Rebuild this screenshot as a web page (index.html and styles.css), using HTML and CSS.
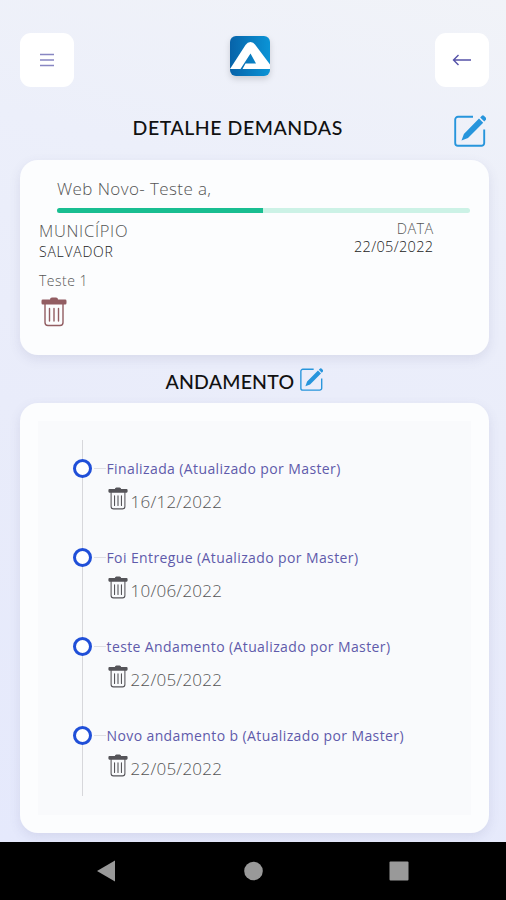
FILE: index.html
```
<!DOCTYPE html>
<html lang="pt-BR">
<head>
    <meta charset="utf-8">
    <title>Detalhe Demandas</title>
    <link rel="stylesheet" href="styles.css">
</head>
<body>
    <!-- Shared icons -->
    <svg class="symbols" width="0" height="0">
        <symbol id="edit" viewBox="0 0 32 32">
            <path d="M19 1.800H4A2.800 2.800 0 0 0 1.200 4.600V28A2.800 2.800 0 0 0 4 30.800H27.400A2.800 2.800 0 0 0 30.200 28V14.500" fill="none" stroke="currentColor" stroke-width="1.900"/>
            <path d="M25 3.600l4.200 4.200L14 23 7.500 25.500l2.400-6.600zM26.200 2.400l1.700-1.600a1.400 1.400 0 0 1 2 0l2 2a1.400 1.400 0 0 1 0 2l-1.600 1.700z" fill="currentColor"/>
        </symbol>
        <symbol id="trash" viewBox="0 0 26 30">
            <path d="M9 2.600Q9 .5 11 .5h4q2 0 2 2.100h7.200q1.300 0 1.300 1.400v2q0 1.500-1.300 1.500H1.800Q.5 7.500 .5 6V4q0-1.400 1.300-1.400z" fill="currentColor"/>
            <path d="M4 7v18.500q0 3 3 3h12q3 0 3-3V7M8.500 11.500v12.500M13 11.500v12.500M17.500 11.500v12.500" fill="none" stroke="currentColor" stroke-width="1.400" stroke-linecap="round"/>
        </symbol>
    </svg>

    <div class="screen">
        <header class="topbar">
            <button class="square-btn">
                <svg width="16" height="14" viewBox="0 0 16 14"><path d="M1 1.500h14M1 7h14M1 12.500h14" stroke="#8886c2" stroke-width="1.500"/></svg>
            </button>
            <svg class="logo" width="40" height="40" viewBox="0 0 40 40">
                <defs>
                    <linearGradient id="blue" x1="0" y1="0" x2="1" y2="0">
                        <stop offset="0" stop-color="#0763a9"/>
                        <stop offset="1" stop-color="#0b94d6"/>
                    </linearGradient>
                </defs>
                <rect width="40" height="40" rx="6" fill="url(#blue)"/>
                <path d="M0 33L15.500 9Q17.500 6 20.500 6t4.500 2.500L40 28.500V33H12.500L15.500 27.500H26L20.500 17.500 10.500 33z" fill="#fff"/>
            </svg>
            <button class="square-btn">
                <svg width="20" height="14" viewBox="0 0 20 14"><path d="M19 7H1.500M6.500 2L1.500 7l5 5" fill="none" stroke="#5552a8" stroke-width="1.400"/></svg>
            </button>
        </header>

        <div class="page-title">
            <h1>DETALHE DEMANDAS</h1>
            <svg class="edit-icon" width="32" height="32"><use href="#edit"/></svg>
        </div>

        <section class="card demand">
            <div class="demand-name">Web Novo- Teste a,</div>
            <div class="progress"><div class="progress-bar" style="width: 50%"></div></div>
            <div class="info">
                <div class="city">
                    <div class="label">MUNICÍPIO</div>
                    <div class="value">SALVADOR</div>
                </div>
                <div class="date">
                    <div class="label">DATA</div>
                    <div class="value">22/05/2022</div>
                </div>
            </div>
            <p class="description">Teste 1</p>
            <svg class="delete" width="26" height="30"><use href="#trash"/></svg>
        </section>

        <div class="section-title">
            <h2>ANDAMENTO</h2>
            <svg class="edit-icon" width="23" height="23"><use href="#edit"/></svg>
        </div>

        <section class="card progress-card">
            <ul class="timeline">
                <li>
                    <div class="step"><span class="dot"></span><span class="dash"></span><span class="step-name">Finalizada (Atualizado por Master)</span></div>
                    <div class="step-date"><svg width="20" height="23"><use href="#trash"/></svg><span>16/12/2022</span></div>
                </li>
                <li>
                    <div class="step"><span class="dot"></span><span class="dash"></span><span class="step-name">Foi Entregue (Atualizado por Master)</span></div>
                    <div class="step-date"><svg width="20" height="23"><use href="#trash"/></svg><span>10/06/2022</span></div>
                </li>
                <li>
                    <div class="step"><span class="dot"></span><span class="dash"></span><span class="step-name">teste Andamento (Atualizado por Master)</span></div>
                    <div class="step-date"><svg width="20" height="23"><use href="#trash"/></svg><span>22/05/2022</span></div>
                </li>
                <li>
                    <div class="step"><span class="dot"></span><span class="dash"></span><span class="step-name">Novo andamento b (Atualizado por Master)</span></div>
                    <div class="step-date"><svg width="20" height="23"><use href="#trash"/></svg><span>22/05/2022</span></div>
                </li>
            </ul>
        </section>
    </div>

    <nav class="android-nav">
        <svg width="506" height="58" viewBox="0 0 506 58" fill="#999">
            <path d="M97 29l18-10.500v21z"/>
            <circle cx="253.500" cy="29" r="9.300"/>
            <rect x="389.500" y="19.500" width="19" height="19" rx="1"/>
        </svg>
    </nav>
</body>
</html>
```
FILE: styles.css
```
* {
    box-sizing: border-box;
}

body {
    margin: 0;
    width: 506px;
    height: 900px;
    overflow: hidden;
    display: flex;
    flex-direction: column;
    font-family: 'Open Sans', sans-serif;
    font-weight: 300;
    color: #555;
    background: #000;
}

.symbols {
    position: absolute;
}

.screen {
    height: 842px;
    padding: 33px 17px 0 19.5px;
    background: linear-gradient(15deg, #e5e9fc 0%, #e9ecfa 45%, #eceffa 75%, #f1f3f8 100%);
}

.topbar {
    display: flex;
    justify-content: space-between;
    align-items: flex-start;
    height: 54px;
}

.square-btn {
    width: 54px;
    height: 54px;
    padding: 0;
    border: none;
    border-radius: 11px;
    background: #fff;
    display: flex;
    align-items: center;
    justify-content: center;
}

.logo {
    margin: 3px 9px 0 0;
    filter: drop-shadow(0 3px 3px rgba(0, 0, 0, 0.15));
}

h1, h2 {
    margin: 0;
    font-family: 'Lato', sans-serif;
    font-weight: 500;
    font-size: 19.5px;
    line-height: 26px;
    color: #111;
    white-space: nowrap;
}

h1 {
    letter-spacing: 0.55px;
}

.page-title {
    display: flex;
    justify-content: space-between;
    height: 72px;
    padding: 28px 3px 0 113px;
}

.edit-icon {
    color: #2795dc;
}

.card {
    width: 469px;
    border-radius: 18px;
    background: #fcfdfe;
    box-shadow: 0 4px 12px rgba(80, 85, 130, 0.12);
}

.demand {
    height: 195px;
    margin-top: 1px;
    padding: 17px 19px 0 19.5px;
}

.demand-name {
    margin-left: 18px;
    font-size: 17px;
    line-height: 24px;
    letter-spacing: 0.4px;
    color: #555;
}

.progress {
    height: 5px;
    margin: 7px 0 0 18px;
    border-radius: 3px;
    background: #ccf2e6;
    overflow: hidden;
}

.progress-bar {
    height: 100%;
    background: #19be91;
}

.info {
    display: flex;
    justify-content: space-between;
    padding: 7px 36px 0 0;
}

.city .label {
    font-size: 16.5px;
    line-height: 22px;
    letter-spacing: 0.7px;
}

.city .value {
    font-size: 14px;
    line-height: 20px;
    letter-spacing: 0.75px;
}

.value {
    color: #222;
}

.date {
    text-align: right;
    font-size: 14.5px;
    line-height: 18px;
    letter-spacing: 0.35px;
}

.description {
    margin: 9px 0 6px;
    font-size: 14px;
    line-height: 20px;
    letter-spacing: 0.5px;
}

.delete {
    display: block;
    margin-left: 2px;
    color: #925d62;
}

.section-title {
    display: flex;
    gap: 6px;
    height: 48px;
    padding: 13px 0 0 146px;
}

.section-title h2 {
    line-height: 28px;
    letter-spacing: 0.2px;
}

.progress-card {
    height: 430px;
    padding: 18px;
}

.timeline {
    height: 394px;
    margin: 0;
    padding: 19px 0 0 35px;
    list-style: none;
    background: #f9fafc;
}

.timeline li {
    height: 89px;
    padding-top: 18px;
    background: linear-gradient(#d7d7db, #d7d7db) 9px 0 / 1px 100% no-repeat;
}

.step {
    display: flex;
    align-items: center;
    height: 20px;
}

.dot {
    width: 19px;
    height: 19px;
    border: 3px solid #204fd8;
    border-radius: 50%;
    background: #fff;
}

.dash {
    width: 12px;
    height: 1px;
    margin: 0 1px 0 2px;
    background: #dedee3;
}

.step-name {
    font-size: 14px;
    font-weight: 400;
    letter-spacing: 0.39px;
    color: #5f5bab;
    white-space: nowrap;
    padding-top: 1px;
}

.step-date {
    display: flex;
    align-items: flex-start;
    margin: 9px 0 0 35px;
    font-size: 17px;
    line-height: 27px;
    letter-spacing: 0.25px;
}

.step-date svg {
    color: #555459;
}

.step-date span {
    padding: 1px 0 0 3px;
}

.android-nav {
    height: 58px;
    background: #000;
}
```
